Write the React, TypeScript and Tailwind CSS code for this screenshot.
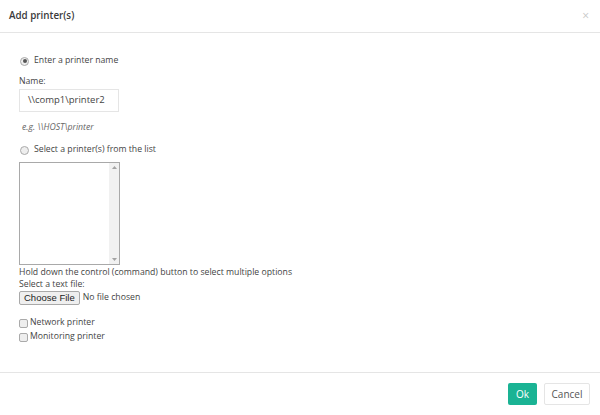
import React from "react";

export default function App() {
  return (
    <div className="w-[600px] h-[415px] bg-white flex flex-col text-[#333]" style={{ fontFamily: '"Open Sans", sans-serif' }}>
      <div className="h-[33px] border-b border-[#e5e5e5] flex items-center justify-between pl-[9px] pr-[11px] shrink-0">
        <span className="text-[9.8px] font-semibold text-[#3a3a3a]">Add printer(s)</span>
        <span className="text-[12px] text-[#c8c8c8] leading-none">×</span>
      </div>
      <div className="flex-1 pl-[19px] pt-[22px] text-[8.7px] text-[#444]">
        <label className="flex items-center gap-[5px] h-[12px] pl-[1px]">
          <span className="w-[9px] h-[9px] rounded-full border border-[#aaa] bg-[#eee] flex items-center justify-center">
            <span className="w-[4px] h-[4px] rounded-full bg-[#555]" />
          </span>
          <span>Enter a printer name</span>
        </label>
        <div className="mt-[8px] leading-[12px]">Name:</div>
        <div className="mt-[2px] w-[100px] h-[23px] border border-[#e5e5e5] flex items-center pl-[8px] text-[9.5px] text-[#444]">\\comp1\printer2</div>
        <div className="mt-[9px] pl-[3px] italic text-[#666] leading-[12px]">e.g. \\HOST\printer</div>
        <label className="mt-[11px] flex items-center gap-[5px] h-[12px] pl-[1px]">
          <span className="w-[9px] h-[9px] rounded-full border border-[#aaa] bg-[#eee]" />
          <span>Select a printer(s) from the list</span>
        </label>
        <div className="mt-[6px] w-[101px] h-[103px] border border-[#a9a9a9] flex justify-end">
          <div className="w-[10px] h-full bg-[#f1f1f1] flex flex-col items-center justify-between py-[3px]">
            <svg width="5" height="3" viewBox="0 0 5 3"><path d="M0 3 L2.5 0 L5 3 Z" fill="#a3a3a3" /></svg>
            <svg width="5" height="3" viewBox="0 0 5 3"><path d="M0 0 L2.5 3 L5 0 Z" fill="#a3a3a3" /></svg>
          </div>
        </div>
        <div className="leading-[12px] mt-[1px]">Hold down the control (command) button to select multiple options</div>
        <div className="leading-[12px]">Select a text file:</div>
        <div className="flex items-center gap-[3px] mt-[1px]">
          <span className="h-[14px] px-[4px] border border-[#a9a9a9] bg-[#efefef] rounded-[2px] flex items-center text-[9.5px] text-[#222]" style={{ fontFamily: '"Liberation Sans", Arial, sans-serif' }}>Choose File</span>
          <span>No file chosen</span>
        </div>
        <label className="mt-[12px] flex items-center gap-[2px] h-[12px]">
          <span className="w-[9px] h-[9px] rounded-[2px] border border-[#aaa] bg-[#eee]" />
          <span>Network printer</span>
        </label>
        <label className="mt-[2px] flex items-center gap-[2px] h-[12px]">
          <span className="w-[9px] h-[9px] rounded-[2px] border border-[#aaa] bg-[#eee]" />
          <span>Monitoring printer</span>
        </label>
      </div>
      <div className="h-[43px] border-t border-[#e5e5e5] flex items-start justify-end gap-[7px] pt-[10px] pr-[10px] shrink-0">
        <button className="h-[22px] w-[29px] bg-[#1ab394] text-white text-[10px] rounded-[2px]">Ok</button>
        <button className="h-[22px] w-[46px] bg-white border border-[#e5e5e5] text-[#555] text-[10px] rounded-[2px]">Cancel</button>
      </div>
    </div>
  );
}
